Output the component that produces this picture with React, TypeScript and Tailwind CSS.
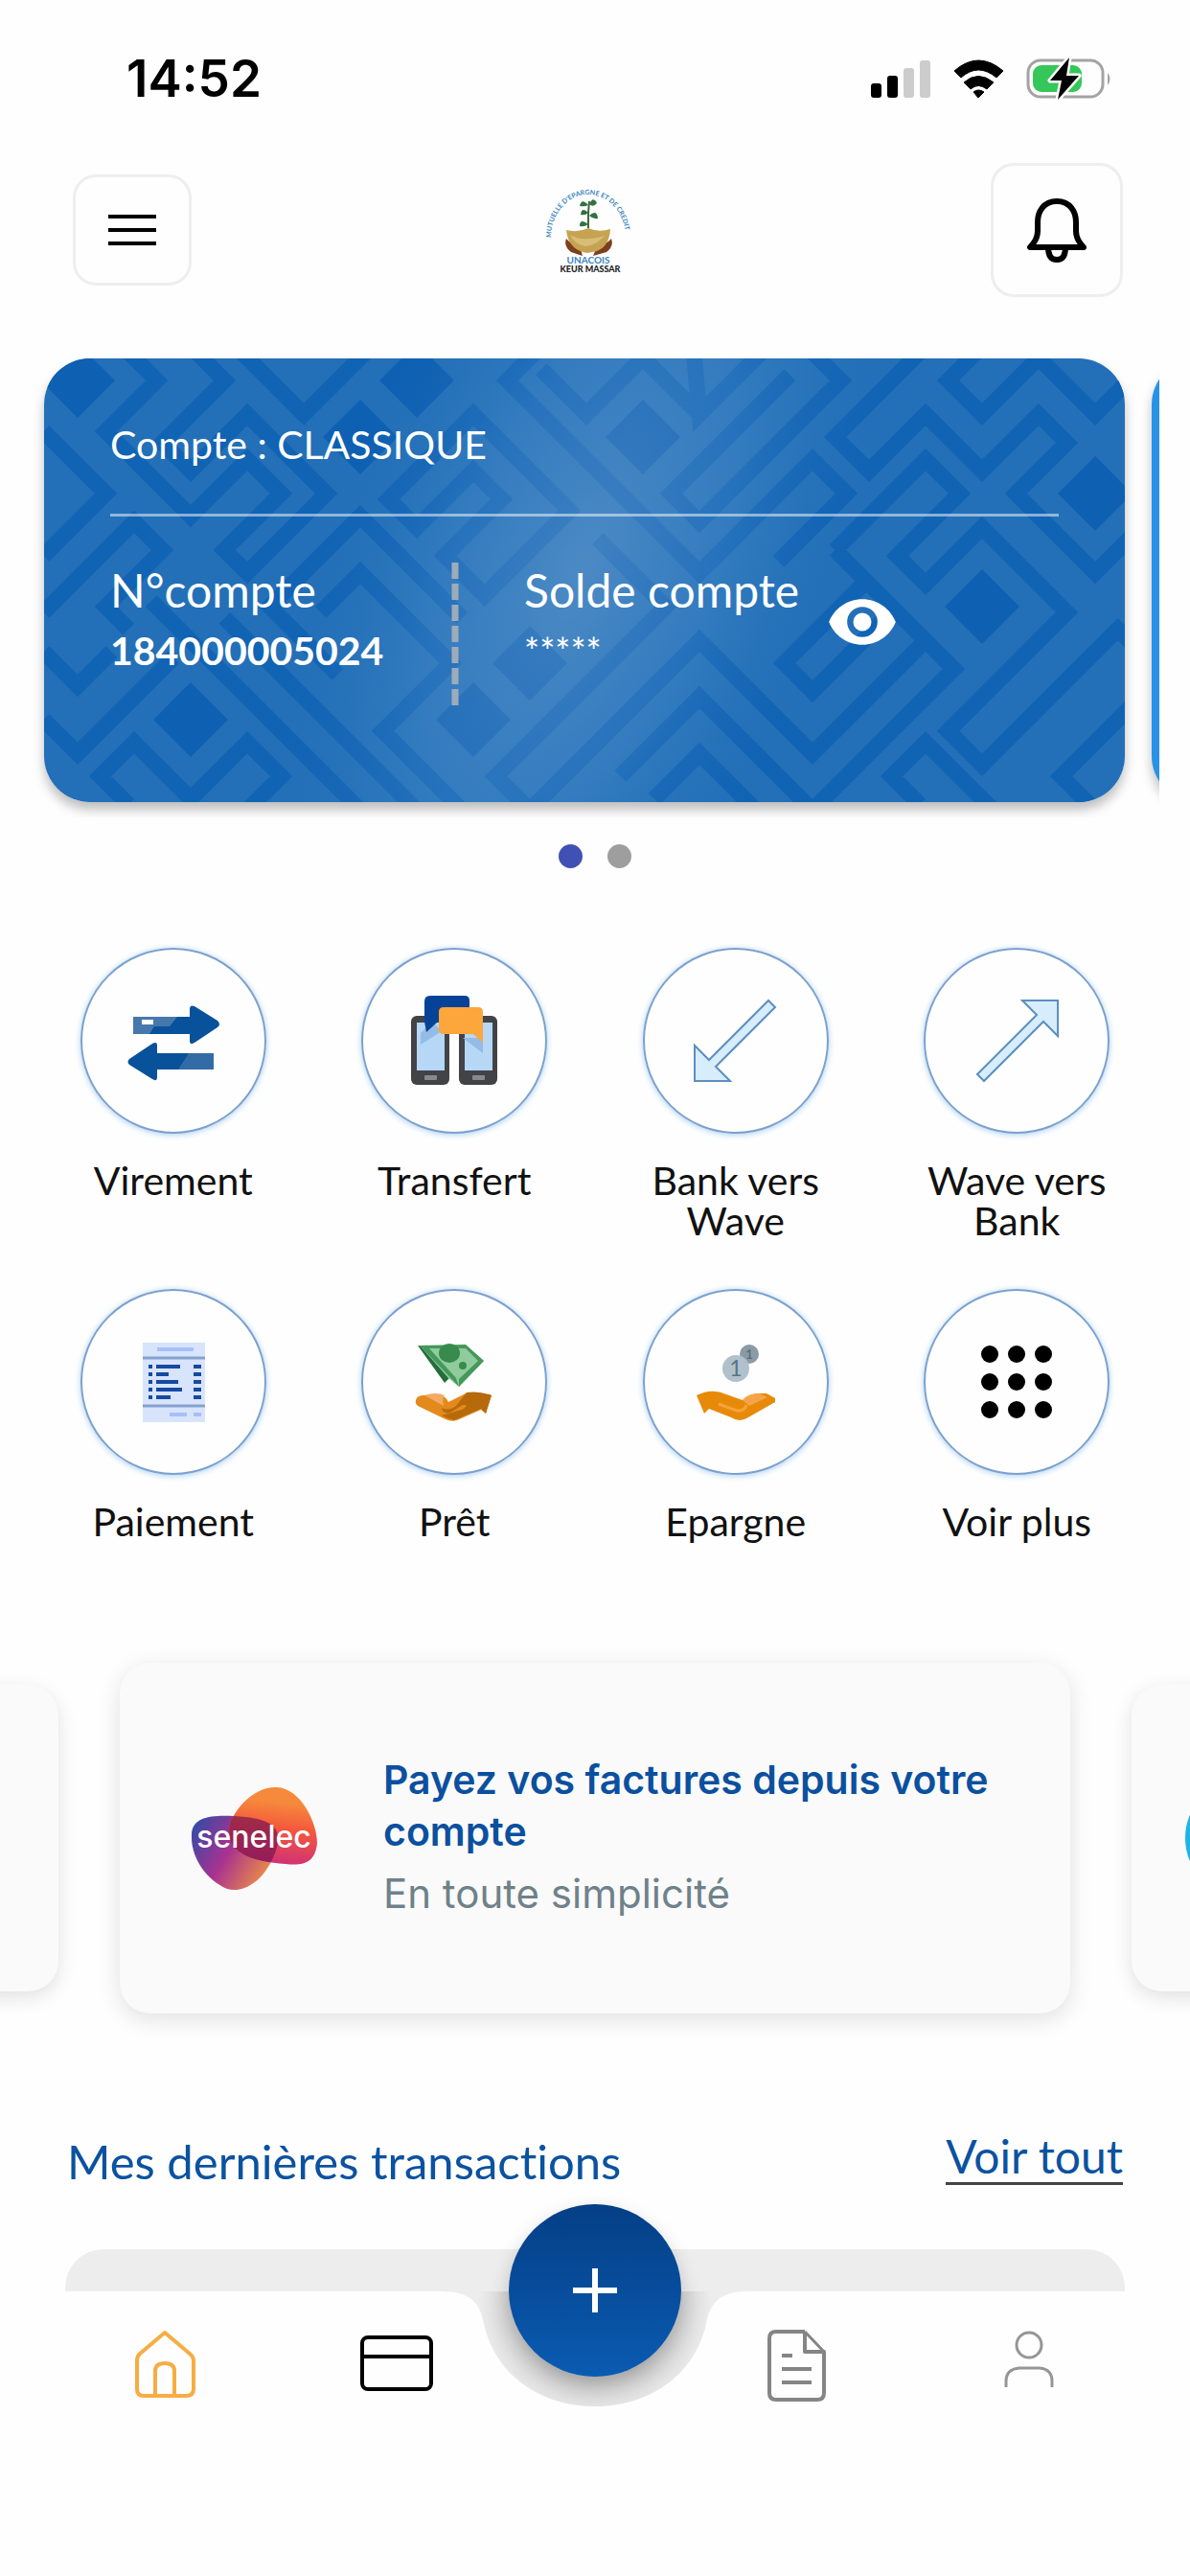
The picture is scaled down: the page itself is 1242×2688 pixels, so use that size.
import { useState } from "react";
import type { ReactNode } from "react";

// Woven background of the account card, one unit = one lattice step
const weave = [
    "M.9-.5L1.4 0L.5.9L2 2.4L3 1.4L3.6 2L2.6 3L3 3.4L4.4 2L3 .6L2 1.6L1.5 1.1L2.6 0L2.1-.5",
    "M2.9-.5L4 .6L5.1-.5",
    "M-.6.9L.5 2L-.6 3.1",
    "M-.6 4.1L1 2.5L1.5 3L.5 4L.9 4.4",
    "M-.6 4.8L0 5.4L.6 4.8",
    "M-.6 6L0 6.6L1.7 4.9",
    "M.9 7.5L.4 7L1 6.4L2 7.4L3 6.4L3.6 7L3 7.6",
    "M1.3 3.9L5.4 8",
    "M2.6 4.2L6.4 8",
    "M6.8 4.2L5 2.4L3.4 4L4.6 5.2",
    "M4.3 4.1L5 3.4L6.6 5L5.4 6.2L7.2 8",
    "M7 .6L5.5 2.1L6 2.6L7 1.6L7.5 2.1L6.5 3.1L7.2 3.8L8.7 2.3Z",
    "M8.1-.5L7.6 0L11 3.4L13 1.4L13.6 2L12.4 3.2",
    "M8.2-.2L9 .6L10.1-.5",
    "M10.9-.5L11 .6L12.1-.5M10-.4L11 .6",
    "M12.6-.1L10.5 2L11 2.5L13.5 0L13-.5",
    "M14.9-.5L13.4 1L14 1.6L15 .6L16 1.6L17 .6L17.5 1.1L16.6 2L18 3.4L19.2 2.2",
    "M15.9-.5L15.4 0L16 .6L17-.4L18 .6L19-.4",
    "M13.4 3L15 1.4L15.6 2L14.5 3.1L15 3.6L16 2.6L17.5 4.1L15.4 6.2L16 6.8L18.4 4.4L19 5",
    "M13.4 3L15.5 5.1L13.1 7.5",
    "M13.9 3.6L12.5 5L13 5.5L14.4 4.1",
    "M8 7.6L11 4.6L13 6.6L14.9 4.7",
    "M9.6 7L11 5.6L13 7.6",
    "M10.2 7.4L11 6.6L12 7.6",
    "M8 7.6L7.4 7L10.4 4L9.2 2.8",
    "M14.9 7.5L14.4 7L15 6.4L16.2 7.6",
    "M18 7.6L17.4 7L19 5.4",
];

const diamonds = [[0, 0], [5, 1], [6, 0], [2, 6], [7, 6], [8, 5], [10, 1], [16, 4], [18, 2]];

function CardPattern() {
    return (
        <svg className="absolute inset-0 h-full w-full" viewBox="0 0 1128 463" preserveAspectRatio="xMidYMid slice" aria-hidden="true">
            <defs>
                <radialGradient id="shine" cx="0.5" cy="0.5" r="0.5">
                    <stop offset="0" stopColor="#8fb4d8" stopOpacity="0.38" />
                    <stop offset="0.5" stopColor="#6ba2d6" stopOpacity="0.24" />
                    <stop offset="1" stopColor="#2d78c0" stopOpacity="0" />
                </radialGradient>
            </defs>
            <rect width="1128" height="463" fill="#2370b8" />
            <g transform="translate(35 23) scale(59)">
                <path d={weave.join("")} fill="none" stroke="#1163b4" strokeWidth="0.28" />
                {diamonds.map(([x, y]) => (
                    <path key={`${x}-${y}`} d={`M${x} ${y - 0.66}L${x + 0.66} ${y}L${x} ${y + 0.66}L${x - 0.66} ${y}Z`} fill="#0e60b2" />
                ))}
            </g>
            <ellipse cx="560" cy="220" rx="260" ry="560" fill="url(#shine)" transform="rotate(22 560 220)" />
        </svg>
    );
}

function StatusIcons() {
    return (
        <svg className="h-12 w-64" viewBox="0 0 256 48" aria-hidden="true">
            <rect x="1" y="28" width="11" height="15" rx="3" />
            <rect x="18" y="20" width="11" height="23" rx="3" />
            <rect x="35" y="12" width="11" height="31" rx="3" fill="#ccc" />
            <rect x="52" y="4" width="11" height="39" rx="3" fill="#ccc" />
            <path d="M88 15Q113-7 139 15L132 22Q113 6 95 22ZM98 27Q113 14 129 27L122 34Q113 27 105 34ZM108 37Q113 33 119 37L113 43Z" stroke="#000" strokeLinejoin="round" />
            <rect x="165" y="4" width="78" height="38" rx="13" fill="none" stroke="#a3a3a3" strokeWidth="3" />
            <path d="M248 17Q253 23 248 30Z" fill="#a3a3a3" />
            <rect x="170" y="9" width="51" height="28" rx="9" fill="#35c759" />
            <path d="M208 1L188 25H200L196 45L218 20H205Z" stroke="#fff" strokeWidth="5" paintOrder="stroke" strokeLinejoin="round" />
        </svg>
    );
}

function BankLogo() {
    return (
        <svg className="h-24 w-24 overflow-visible" viewBox="4 0 96 96" role="img" aria-label="Mutuelle d'Epargne et de Crédit UNACOIS Keur Massar">
            <path id="arc" d="M10 56A39 45 0 1 1 88 56" fill="none" />
            <text fontSize="7" fill="#3c86bd" className="font-[Lato] font-bold">
                <textPath href="#arc">MUTUELLE D'EPARGNE ET DE CREDIT</textPath>
            </text>
            <path d="M49 46V30L50 18" stroke="#3d6b35" strokeWidth="2" fill="none" />
            <path d="M49 22Q42 14 40 23Q45 24 49 22ZM50 21Q54 12 58 20Q54 25 50 21ZM49 30Q42 23 41 32Q46 33 49 30ZM50 33Q58 26 59 36Q54 37 50 33ZM49 42Q40 35 40 44Q45 45 49 42Z" fill="#2f7143" />
            <path d="M26 57Q23 65 31 71L43 75L41 68L29 60ZM73 57Q76 65 68 71L54 75L57 68L70 60Z" fill="#7c3f1e" />
            <path d="M26 48Q38 51 49 46Q60 51 72 47Q71 65 58 70L48 72Q28 69 26 48Z" fill="#c6a353" />
            <path d="M30 53Q42 61 66 54Q57 64 46 65Q35 63 30 53Z" fill="#d8bd76" />
            <text x="49" y="83" fontSize="10" textAnchor="middle" fill="#3c86bd" className="font-[Lato] font-bold">UNACOIS</text>
            <text x="51" y="92" fontSize="9" textAnchor="middle" fill="#222" className="font-[Lato] font-black">KEUR MASSAR</text>
        </svg>
    );
}

function SenelecLogo() {
    return (
        <svg className="h-28 w-36" viewBox="0 0 144 112" role="img" aria-label="senelec">
            <defs>
                <linearGradient id="orange" x1="0.6" y1="0.2" x2="0.5" y2="1">
                    <stop offset="0" stopColor="#f6893c" />
                    <stop offset="0.4" stopColor="#f4593c" />
                    <stop offset="1" stopColor="#cf3078" />
                </linearGradient>
                <linearGradient id="violet" x1="0" y1="0.2" x2="1" y2="0.7">
                    <stop offset="0" stopColor="#3a49a5" />
                    <stop offset="0.45" stopColor="#a83290" />
                    <stop offset="1" stopColor="#f4973e" />
                </linearGradient>
                <clipPath id="lobe">
                    <path d="M3 53C3 33 25 32 47 33C73 35 102 38 91 69C80 101 57 114 40 109C19 100 2 77 3 53Z" />
                </clipPath>
            </defs>
            <path d="M3 53C3 33 25 32 47 33C73 35 102 38 91 69C80 101 57 114 40 109C19 100 2 77 3 53Z" fill="url(#violet)" />
            <path d="M44 38C55 15 75 2 92 3C117 4 134 40 134 61C132 82 120 85 101 83C64 80 34 71 44 38Z" fill="url(#orange)" />
            <path d="M44 38C55 15 75 2 92 3C117 4 134 40 134 61C132 82 120 85 101 83C64 80 34 71 44 38Z" fill="#7a1450" fillOpacity="0.7" clipPath="url(#lobe)" />
            <text x="68" y="66" fontSize="32" textAnchor="middle" fill="#fff" className="font-[Inter] font-medium">senelec</text>
        </svg>
    );
}

const VirementIcon = () => (
    <svg className="h-24 w-24" viewBox="0 0 96 96">
        <path d="M6 23H65V15Q65 10 70 12L94 27Q98 31 94 34L70 50Q65 53 65 48V41H6Z" fill="#07529a" />
        <path d="M6 23H52L44 33H28L23 41H6Z" fill="#4678ad" />
        <rect x="15" y="26" width="12" height="5" fill="#fff" />
        <path d="M90 61V78H31V86Q31 91 26 88L2 73Q-1 70 2 67L26 51Q31 48 31 53V61Z" fill="#07529a" />
        <path d="M90 61H64L53 78H90Z" fill="#336ba6" />
    </svg>
);

const TransfertIcon = () => (
    <svg className="h-24 w-24" viewBox="0 0 96 96">
        {[3, 53].map((x) => (
            <g key={x}>
                <rect x={x} y="22" width="40" height="72" rx="6" fill="#424347" />
                <rect x={x + 6} y="29" width="29" height="50" fill="#b6d7f6" />
                <rect x={x + 14} y="84" width="13" height="5" rx="1" fill="#85898e" />
            </g>
        ))}
        <path d="M13 52V40L25 28L35 38Z" fill="#94bce5" />
        <path d="M57 45L78 61V45Z" fill="#94bce5" />
        <path d="M23 1H59Q64 1 64 6V29H30L19 39L17 28V7Q17 1 23 1Z" fill="#064397" />
        <path d="M37 13H73Q78 13 78 18V50L68 41H37Q32 41 32 36V18Q32 13 37 13Z" fill="#fca63b" />
    </svg>
);

const ArrowShape = ({ down }: { down?: boolean }) => (
    <svg className={down ? "h-24 w-24 rotate-180" : "h-24 w-24"} viewBox="0 0 96 96">
        <path d="M7 83L69 21L54 6H91V43L76 28L14 90Z" fill="#d7edfc" stroke="#5c8fc0" strokeWidth="2" />
    </svg>
);

const PaiementIcon = () => (
    <svg className="h-24 w-24" viewBox="0 0 96 96">
        <rect x="16" y="7" width="65" height="83" fill="#d8e4fc" />
        <path d="M16 23H81M16 73H81" stroke="#85a1cf" strokeWidth="3" />
        <path d="M31 14H69M44 82H62M69 82H77" stroke="#a8bffa" strokeWidth="4" />
        <path d="M22 32H26M30 32H55M69 32H77M22 40H26M30 40H43M69 40H77M22 48H26M30 48H53M69 48H77M22 56H26M30 56H57M69 56H77M22 64H26M30 64H45M69 64H77" stroke="#174aa0" strokeWidth="4" />
    </svg>
);

const PretIcon = () => (
    <svg className="h-24 w-24" viewBox="0 0 96 96">
        <path d="M10 10L30 13L44 43L38 49Z" fill="#246d3b" />
        <path d="M12 10H60L79 26L53 53L42 44Z" fill="#8fcb9c" />
        <path d="M12 10L53 53L50 44L22 13H60L73 26L53 45V53L79 26L60 9Z" fill="#45985b" />
        <ellipse cx="43" cy="18" rx="11" ry="10" fill="#378b4b" />
        <circle cx="57" cy="31" r="4" fill="#378b4b" />
        <path d="M8 67Q9 62 17 62L31 61Q40 63 42 69L60 60Q67 57 87 62L81 81L76 77L51 88Q45 90 39 87L10 73Q7 71 8 67Z" fill="#e48a1c" />
        <path d="M35 75Q42 79 50 73L61 59Q74 57 87 62L81 81L76 76L48 88Q40 86 35 83L56 77Q65 72 57 72L44 80Q36 82 35 75Z" fill="#b76a0b" />
        <path d="M17 62Q29 58 38 62Q35 65 37 73Z" fill="#f2aa64" />
    </svg>
);

const EpargneIcon = () => (
    <svg className="h-24 w-24" viewBox="0 0 96 96">
        <circle cx="62" cy="19" r="10" fill="#8b9ba6" />
        <text x="62" y="24" fontSize="13" textAnchor="middle" fill="#58707d" className="font-[Lato] font-bold">1</text>
        <circle cx="48" cy="34" r="14" fill="#b1c1cb" />
        <text x="48" y="42" fontSize="23" textAnchor="middle" fill="#587383" className="font-[Lato]">1</text>
        <path d="M7 62Q23 54 38 61L55 67L69 60H80L89 65V69L61 85Q52 91 43 85L20 76L15 81Z" fill="#e78a08" />
        <path d="M55 67Q60 60 72 60L81 64L62 73Z" fill="#f5a44b" />
        <path d="M30 71L49 78Q57 79 59 72" fill="none" stroke="#f7a23c" strokeWidth="3" />
    </svg>
);

const VoirPlusIcon = () => (
    <svg className="h-24 w-24" viewBox="0 0 96 96">
        {[19, 48, 77].map((y) => [20, 48, 76].map((x) => <circle key={`${x}-${y}`} cx={x} cy={y} r="9" />))}
    </svg>
);

const services: { label: string; icon: ReactNode }[] = [
    { label: "Virement", icon: <VirementIcon /> },
    { label: "Transfert", icon: <TransfertIcon /> },
    { label: "Bank vers Wave", icon: <ArrowShape down /> },
    { label: "Wave vers Bank", icon: <ArrowShape /> },
    { label: "Paiement", icon: <PaiementIcon /> },
    { label: "Prêt", icon: <PretIcon /> },
    { label: "Epargne", icon: <EpargneIcon /> },
    { label: "Voir plus", icon: <VoirPlusIcon /> },
];

function AccountCard() {
    const [visible, setVisible] = useState(false);

    return (
        <section className="mr-8 overflow-hidden pt-16 pb-4 pl-[46px]">
            <div className="flex gap-7">
                <article className="relative h-[463px] w-[calc(100%-36px)] shrink-0 overflow-hidden rounded-[48px] shadow-[0_8px_12px_rgba(0,0,0,0.25)]">
                    <CardPattern />
                    <div className="relative px-[69px] pt-[62px] text-white">
                        <h2 className="pb-11 text-[41px] leading-[56px]">Compte : CLASSIQUE</h2>
                        <div className="flex border-t-[3px] border-white/50 pt-11">
                            <div className="w-[356px]">
                                <p className="text-[48px] leading-[66px]">N°compte</p>
                                <p className="text-[41px] leading-[60px] font-bold">184000005024</p>
                            </div>
                            <svg className="mt-1 h-[152px] w-2" viewBox="0 0 8 152" aria-hidden="true">
                                <path d="M4 0V152" stroke="#9eabb8" strokeWidth="7" strokeDasharray="17 5" />
                            </svg>
                            <div className="ml-[68px]">
                                <p className="text-[48px] leading-[66px]">Solde compte</p>
                                <p className="text-[38px] leading-[60px]">{visible ? "-" : "*****"}</p>
                            </div>
                            <button className="mt-2 ml-7 h-[116px]" aria-label="Afficher le solde" onClick={() => setVisible(!visible)}>
                                <svg className="h-[76px] w-[76px]" viewBox="0 0 24 24">
                                    <path fill="#fff" d="M12 4.500C7 4.500 2.730 7.610 1 12c1.730 4.390 6 7.500 11 7.500s9.270-3.110 11-7.500C21.270 7.610 17 4.500 12 4.500zm0 12.500a5 5 0 110-10 5 5 0 010 10zm0-8a3 3 0 100 6 3 3 0 000-6z" />
                                </svg>
                            </button>
                        </div>
                    </div>
                </article>
                <div className="h-[463px] w-full shrink-0 rounded-[48px] bg-[#2893e6] shadow-[0_8px_12px_rgba(0,0,0,0.25)]" />
            </div>
        </section>
    );
}

export default function App() {
    return (
        <div className="flex min-h-screen flex-col overflow-hidden bg-[#fefefe] font-[Lato,sans-serif] text-[#111]">
            <div className="flex h-[162px] items-center justify-between pt-1 pr-[78px] pl-[132px]">
                <span className="font-[Inter,sans-serif] text-[53px] font-semibold text-black">14:52</span>
                <StatusIcons />
            </div>

            <header className="flex items-center justify-between pt-2 pr-[70px] pl-[76px]">
                <button className="flex h-[116px] w-[124px] items-center justify-center rounded-3xl border-[3px] border-[#eee]" aria-label="Menu">
                    <svg className="h-10 w-14" viewBox="0 0 56 40">
                        <path d="M3 6H53M3 20H53M3 34H53" stroke="#000" strokeWidth="4" />
                    </svg>
                </button>
                <BankLogo />
                <button className="flex h-[140px] w-[138px] items-center justify-center rounded-3xl border-[3px] border-[#eee]" aria-label="Notifications">
                    <svg className="h-18 w-18" viewBox="0 0 72 72" fill="none" stroke="#000" strokeWidth="6" strokeLinejoin="round">
                        <path d="M36 6C22 6 16 17 16 28V37Q16 46 8 54H64Q56 46 56 37V28C56 17 50 6 36 6Z" />
                        <path d="M27 54Q27 67 36 67Q45 67 45 54" />
                    </svg>
                </button>
            </header>

            <main className="flex flex-1 flex-col">
                <AccountCard />

                <div className="flex justify-center gap-[26px] pt-7">
                    <span className="h-[25px] w-[25px] rounded-full bg-[#4050b5]" />
                    <span className="h-[25px] w-[25px] rounded-full bg-[#9e9e9e]" />
                </div>

                <nav className="grid grid-cols-4 px-[34px] pt-[83px]" aria-label="Services">
                    {services.map((service) => (
                        <button key={service.label} className="flex h-[356px] flex-col items-center">
                            <span className="flex h-[194px] w-[194px] items-center justify-center rounded-full border-2 border-[#7ba1ce] shadow-[0_1px_6px_#a9cff3]">
                                {service.icon}
                            </span>
                            <span className="mt-7 w-52 text-[41px] leading-[42px]">{service.label}</span>
                        </button>
                    ))}
                </nav>

                <section className="flex items-center justify-center gap-16 pt-[34px]">
                    <div className="h-[320px] w-[840px] shrink-0 rounded-[32px] bg-[#fafafa] shadow-[0_6px_20px_rgba(0,0,0,0.12)]" />
                    <a href="#factures" className="flex h-[366px] w-[992px] shrink-0 items-center rounded-[32px] bg-[#fafafa] pl-[72px] font-[Inter,sans-serif] shadow-[0_6px_24px_rgba(0,0,0,0.12)]">
                        <SenelecLogo />
                        <div className="ml-[59px] w-[660px]">
                            <p className="text-[41px] leading-[54px] font-semibold text-[#0b509f]">Payez vos factures depuis votre compte</p>
                            <p className="mt-2 text-[42px] leading-[60px] text-[#6f8189]">En toute simplicité</p>
                        </div>
                    </a>
                    <div className="flex h-[320px] w-[840px] shrink-0 items-center rounded-[32px] bg-[#fafafa] pl-[56px] shadow-[0_6px_20px_rgba(0,0,0,0.12)]">
                        <span className="h-[124px] w-[124px] rounded-full bg-[#1eb5e5]" />
                    </div>
                </section>

                <section className="flex flex-1 flex-col px-[68px] pt-[118px]">
                    <div className="flex items-start justify-between px-[2px]">
                        <h2 className="pt-1 text-[49px] leading-[64px] text-[#0b52a0] [font-variant-ligatures:none]">Mes dernières transactions</h2>
                        <a href="#transactions" className="mt-1 border-b-[3px] border-[#444] text-[48px] leading-[54px] text-[#0b52a0]">Voir tout</a>
                    </div>
                    <div className="mt-[60px] min-h-10 flex-1 rounded-t-[40px] bg-[#ededed]" />
                </section>
            </main>

            {/* Bottom bar with the notch under the round button */}
            <footer className="relative h-[297px]">
                <svg className="absolute top-0 left-1/2 h-[124px] w-[320px] -translate-x-1/2" viewBox="0 0 320 124" aria-hidden="true">
                    <defs>
                        <radialGradient id="notch" gradientUnits="userSpaceOnUse" cx="160" cy="10" r="122">
                            <stop offset="0.65" stopColor="#cacaca" />
                            <stop offset="0.95" stopColor="#e8e8e8" />
                            <stop offset="1" stopColor="#ededed" />
                        </radialGradient>
                    </defs>
                    <path d="M0 0C30 0 40 12 44 34C56 88 104 120 160 120S264 88 276 34C280 12 290 0 320 0Z" fill="url(#notch)" />
                </svg>
                <button className="absolute -top-[91px] left-1/2 flex h-[180px] w-[180px] -translate-x-1/2 items-center justify-center rounded-full bg-linear-to-b from-[#053f86] to-[#0a5bb2] shadow-[0_8px_20px_rgba(0,0,0,0.2)]" aria-label="Ajouter">
                    <svg className="h-12 w-12" viewBox="0 0 48 48">
                        <path d="M24 1V47M1 24H47" stroke="#fff" strokeWidth="6" />
                    </svg>
                </button>
                <nav className="flex justify-between pt-[38px] pr-[140px] pl-[136px]" aria-label="Navigation principale">
                    <div className="flex gap-[166px]">
                        <a href="#accueil" aria-label="Accueil">
                            <svg className="h-20 w-[72px]" viewBox="0 0 72 80" fill="none" stroke="#f6ad43" strokeWidth="4" strokeLinejoin="round">
                                <path d="M36 5L10 27Q7 30 7 34V64Q7 71 14 71H58Q66 71 66 64V34Q66 30 62 27Z" />
                                <path d="M26 71V45Q26 37 36 37T46 45V71" />
                            </svg>
                        </a>
                        <a href="#cartes" aria-label="Cartes">
                            <svg className="h-20 w-20" viewBox="0 0 80 80" fill="none" stroke="#000" strokeWidth="4">
                                <rect x="4" y="10" width="72" height="54" rx="6" />
                                <path d="M4 30H76" />
                            </svg>
                        </a>
                    </div>
                    <div className="flex gap-[182px]">
                        <a href="#releves" aria-label="Relevés">
                            <svg className="h-20 w-16" viewBox="0 0 64 80" fill="none" stroke="#858585" strokeWidth="4" strokeLinejoin="round">
                                <path d="M40 4H10Q3 4 3 11V68Q3 75 10 75H53Q60 75 60 68V25H40V4" />
                                <path d="M40 4L60 25" strokeWidth="3" />
                                <path d="M16 29H27M16 43H47M16 57H47" />
                            </svg>
                        </a>
                        <a href="#profil" aria-label="Profil">
                            <svg className="h-16 w-14" viewBox="0 0 56 64" fill="none" stroke="#969696" strokeWidth="3">
                                <circle cx="28" cy="18" r="13" />
                                <path d="M4 62V56Q4 43 18 42H39Q52 43 52 56V62" />
                            </svg>
                        </a>
                    </div>
                </nav>
            </footer>
        </div>
    );
}
